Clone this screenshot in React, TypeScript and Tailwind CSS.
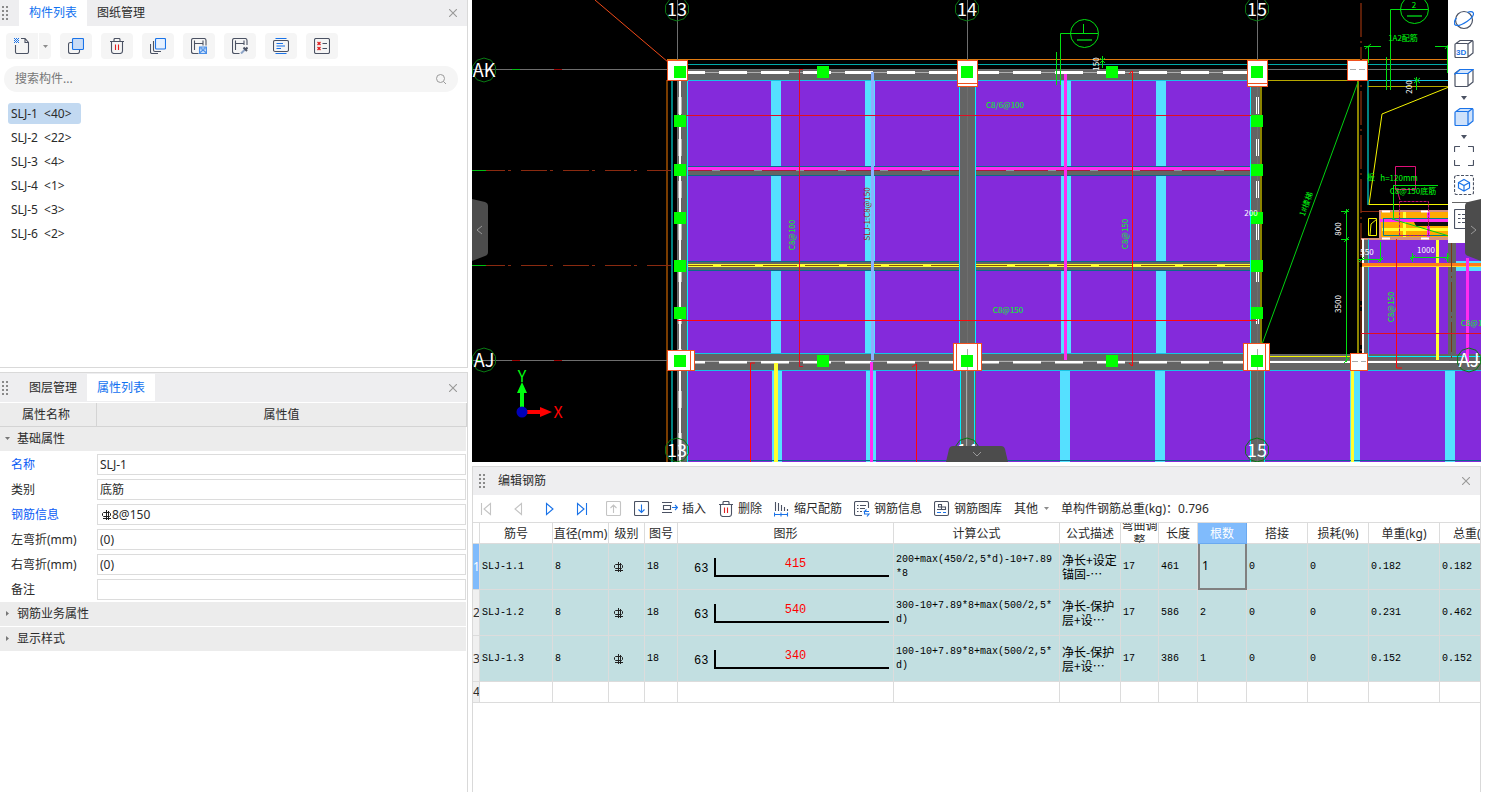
import { useState } from 'react'
import type { ReactNode } from 'react'

const INK = '#4b5263'
const BLUE = '#1a73e8'

const components = [
  { name: 'SLJ-1', count: 40 },
  { name: 'SLJ-2', count: 22 },
  { name: 'SLJ-3', count: 4 },
  { name: 'SLJ-4', count: 1 },
  { name: 'SLJ-5', count: 3 },
  { name: 'SLJ-6', count: 2 },
]

const properties = [
  { id: 'name', label: '名称', value: 'SLJ-1', key: true },
  { id: 'category', label: '类别', value: '底筋' },
  { id: 'rebar', label: '钢筋信息', value: '8@150', key: true, grade: true },
  { id: 'left', label: '左弯折(mm)', value: '(0)' },
  { id: 'right', label: '右弯折(mm)', value: '(0)' },
  { id: 'remark', label: '备注', value: '' },
]

const bars = [
  { id: 'SLJ-1.1', len: '415', formula: '200+max(450/2,5*d)-10+7.89*8', desc: '净长+设定锚固-…', total: '461', count: '1', weight: '0.182', sum: '0.182' },
  { id: 'SLJ-1.2', len: '540', formula: '300-10+7.89*8+max(500/2,5*d)', desc: '净长-保护层+设…', total: '586', count: '2', weight: '0.231', sum: '0.462' },
  { id: 'SLJ-1.3', len: '340', formula: '100-10+7.89*8+max(500/2,5*d)', desc: '净长-保护层+设…', total: '386', count: '1', weight: '0.152', sum: '0.152' },
]

const headings = ['筋号', '直径(mm)', '级别', '图号', '图形', '计算公式', '公式描述', '弯曲调整', '长度', '根数', '搭接', '损耗(%)', '单重(kg)', '总重(kg)']

function Icon({ children, size = 'h-4 w-4' }: { children: ReactNode; size?: string }) {
  return (
    <svg viewBox="0 0 16 16" className={`${size} shrink-0`} fill="none" stroke={INK} strokeWidth="1.1" aria-hidden="true">
      {children}
    </svg>
  )
}

function Grip() {
  return (
    <svg viewBox="0 0 6 14" className="h-[14px] w-[6px] shrink-0" fill="#8a8a8a" aria-hidden="true">
      {[0, 4, 8, 12].map((y) => (
        <g key={y}>
          <rect x="0" y={y} width="2" height="2" />
          <rect x="4" y={y} width="2" height="2" />
        </g>
      ))}
    </svg>
  )
}

function CloseButton() {
  return (
    <button type="button" aria-label="关闭" className="ml-auto flex h-4 w-4 items-center justify-center">
      <svg viewBox="0 0 8 8" className="h-2 w-2" stroke="#999" strokeWidth="1.1" aria-hidden="true">
        <path d="M0 0L8 8M8 0L0 8" />
      </svg>
    </button>
  )
}

// HRB400 steel grade sign
function GradeSign() {
  return (
    <svg viewBox="0 0 10 10" className="h-[10px] w-[10px] shrink-0" fill="none" stroke="#222" strokeWidth="1" aria-label="HRB400">
      <path d="M4.500 0V10M1.500 2.500H7.500L8.500 3.500V5.500L7.500 6.500H1.500L0.500 5.500V3.500ZM1 8.500H9M6.500 1V10" />
    </svg>
  )
}

function Trash() {
  return (
    <Icon>
      <path d="M1 3.500H15M5 3.500V1.500Q5 0.500 6 0.500H10Q11 0.500 11 1.500V3.500M2.500 3.500V13Q2.500 15.500 5 15.500H11Q13.500 15.500 13.500 13V3.500" />
      <path d="M6.500 6.500V12M9.500 6.500V12" stroke="#e02020" />
    </Icon>
  )
}

const checker = (x: number, y: number, color: string) => (
  <g fill={color} stroke="none">
    <path d={`M${x} ${y}h1v1h-1zM${x + 2} ${y}h1v1h-1zM${x + 1} ${y + 1}h1v1h-1zM${x} ${y + 2}h1v1h-1zM${x + 2} ${y + 2}h1v1h-1z`} />
  </g>
)

const listTools = [
  {
    label: '复制',
    icon: (
      <Icon>
        <path d="M4 4.500H2.500Q0.500 4.500 0.500 6.500V13.500Q0.500 15.500 2.500 15.500H9.500Q11.500 15.500 11.500 13.500V12" />
        <rect x="4.500" y="0.500" width="11" height="11" rx="1" fill="#c9dcf6" stroke={BLUE} />
      </Icon>
    ),
  },
  { label: '删除', icon: <Trash /> },
  {
    label: '层间复制',
    icon: (
      <Icon>
        <rect x="5.500" y="0.500" width="10" height="10.500" rx="1" fill="#e6f1ff" stroke={BLUE} />
        <path d="M3.500 3V12Q3.500 13.500 5 13.500H11M0.500 6V14Q0.500 15.500 2 15.500H8" />
      </Icon>
    ),
  },
  {
    label: '存档',
    icon: (
      <Icon>
        <path d="M7.500 15.500H2.500Q0.500 15.500 0.500 13.500V2.500Q0.500 0.500 2.500 0.500H13Q15 0.500 15 2.500V7.500M3.500 2.500V12M3.500 5.500H12M12 2.500V7.500" />
        <path d="M8.500 9H15.500V15.500H8.500Z" fill="#cfe2fb" stroke="#4a8fe7" />
        <path d="M8.500 15L12 12L15.500 15M10 9V11H14V9" stroke="#4a8fe7" />
      </Icon>
    ),
  },
  {
    label: '提取',
    icon: (
      <Icon>
        <path d="M7.500 15.500H2.500Q0.500 15.500 0.500 13.500V2.500Q0.500 0.500 2.500 0.500H13Q15 0.500 15 2.500V7M3.500 2.500V12M3.500 5.500H12M12 2.500V7" />
        <path d="M9 15.500L13 11.500" stroke="#8fa6c8" strokeWidth="2" />
        <path d="M11.500 9.500L15 13M13.500 11.500L15.500 9.500" strokeWidth="2" />
      </Icon>
    ),
  },
  {
    label: '排序',
    icon: (
      <Icon>
        <rect x="0.500" y="2.500" width="15" height="11" rx="1.500" />
        <path d="M2.500 0.500H13.500M2.500 15.500H13.500M3.500 5.500H10M3.500 8H12M3.500 10.500H8" stroke={BLUE} />
      </Icon>
    ),
  },
  {
    label: '过滤',
    icon: (
      <Icon>
        <rect x="0.500" y="0.500" width="15" height="15" rx="1.500" />
        <path d="M8.500 5.500H13M8.500 10.500H13" />
        <path d="M3.500 4L6.500 7M6.500 4L3.500 7M3.500 9L6.500 12M6.500 9L3.500 12" stroke="#e02020" strokeWidth="1.300" />
      </Icon>
    ),
  },
]

function ComponentPanel() {
  const [selected, setSelected] = useState('SLJ-1')
  return (
    <section className="mb-1 min-h-0 overflow-hidden border-b border-r border-[#d9d9d9]">
      <header className="flex h-[26px] items-center bg-[#eeeef0] pl-[2px] pr-[6px]">
        <Grip />
        <button type="button" className="ml-[11px] h-full w-[68px] bg-white text-[#1071f0]">构件列表</button>
        <button type="button" className="h-full w-[68px]">图纸管理</button>
        <CloseButton />
      </header>
      <div className="flex gap-[9px] px-[6px] pt-[7px]">
        <div className="flex gap-px">
          <button type="button" aria-label="新建" className="flex h-[26px] w-8 items-center justify-center rounded-l bg-[#f5f5f5]">
            <Icon>
              <path d="M1.500 7V14Q1.500 15.500 3 15.500H13Q14.500 15.500 14.500 14V4.500L11 0.500H7M11 0.500V4.500H14.500" />
              {checker(0, 0, BLUE)}
              {checker(2, 2, BLUE)}
              {checker(2, 0, BLUE)}
              {checker(0, 2, BLUE)}
            </Icon>
          </button>
          <button type="button" aria-label="更多新建" className="flex h-[26px] w-3 items-center justify-center rounded-r bg-[#f5f5f5]">
            <svg viewBox="0 0 5 3" className="h-[3px] w-[5px]" fill="#8c8c8c" aria-hidden="true"><path d="M0 0H5L2.500 3Z" /></svg>
          </button>
        </div>
        {listTools.map((tool) => (
          <button key={tool.label} type="button" aria-label={tool.label} className="flex h-[26px] w-8 items-center justify-center rounded bg-[#f5f5f5]">
            {tool.icon}
          </button>
        ))}
      </div>
      <div className="ml-1 mr-[9px] mt-[7px] flex h-[26px] items-center rounded-full bg-[#f5f5f5] pl-[11px] pr-3">
        <input aria-label="搜索构件" placeholder="搜索构件..." className="min-w-0 flex-1 bg-transparent outline-none placeholder:text-[#777]" />
        <svg viewBox="0 0 10 10" className="h-[10px] w-[10px]" fill="none" stroke="#999" aria-hidden="true">
          <circle cx="4.500" cy="4.500" r="4" />
          <path d="M7.500 7.500L10 10" />
        </svg>
      </div>
      <ul className="flex flex-col items-start gap-[3px] pl-2 pt-[11px]">
        {components.map((c) => (
          <li key={c.name}>
            <button
              type="button"
              onClick={() => setSelected(c.name)}
              className={`block h-[21px] min-w-[73px] whitespace-pre rounded-[3px] px-[3px] text-left ${selected === c.name ? 'bg-[#c2d9f1]' : ''}`}
            >
              {`${c.name}  <${c.count}>`}
            </button>
          </li>
        ))}
      </ul>
    </section>
  )
}

function GroupRow({ label, open = false }: { label: string; open?: boolean }) {
  return (
    <button type="button" aria-expanded={open} className="mb-px flex h-6 w-full items-center gap-[6px] bg-[#ececec] pl-[5px] text-left">
      <svg viewBox="0 0 6 6" className="h-[6px] w-[6px]" fill="#777" aria-hidden="true">
        {open ? <path d="M0 1H5L2.500 4Z" /> : <path d="M1 0V5L4 2.500Z" />}
      </svg>
      {label}
    </button>
  )
}

function PropertyPanel() {
  return (
    <section className="min-h-0 overflow-hidden border-r border-t border-[#d9d9d9]">
      <header className="mb-px flex h-[29px] items-center bg-[#eeeef0] pl-[2px] pr-[6px]">
        <Grip />
        <button type="button" className="ml-[11px] h-full w-[68px]">图层管理</button>
        <button type="button" className="h-[27px] w-[68px] bg-white text-[#1071f0]">属性列表</button>
        <CloseButton />
      </header>
      <div className="flex h-6 items-center border-b border-[#d4d4d4] bg-[#ececec] text-center">
        <div className="h-full w-[97px] border-r border-[#d4d4d4] pr-1 leading-6">属性名称</div>
        <div className="h-full flex-1 border-r border-[#d4d4d4] leading-6">属性值</div>
      </div>
      <div className="pr-px">
        <GroupRow label="基础属性" open />
        {properties.map((p) => (
          <div key={p.id} className="flex h-[25px] items-center">
            <label htmlFor={p.id} className={`w-[97px] pl-[11px] ${p.key ? 'text-[#0a5cf5]' : ''}`}>{p.label}</label>
            <div className="flex h-[21px] min-w-0 flex-1 items-center border border-[#dcdcdc] pl-[2px]">
              {p.grade && <span className="pl-[2px]"><GradeSign /></span>}
              <input id={p.id} defaultValue={p.value} className="min-w-0 flex-1 bg-transparent outline-none" />
            </div>
          </div>
        ))}
        <GroupRow label="钢筋业务属性" />
        <GroupRow label="显示样式" />
      </div>
    </section>
  )
}

const greenGrips = [
  ...[680, 823, 967, 1112, 1257].flatMap((x) => [[x, 72], [x, 361]]),
  ...[121, 170, 218, 266, 313].flatMap((y) => [[680, y], [1257, y]]),
]

const axisTags = [
  { x: 677, y: 9, t: '13' }, { x: 967, y: 9, t: '14' }, { x: 1257, y: 9, t: '15' },
  { x: 484, y: 70, t: 'AK' }, { x: 484, y: 360, t: 'AJ' }, { x: 1469, y: 360, t: 'AJ' },
  { x: 677, y: 450, t: '13' }, { x: 967, y: 450, t: '14' }, { x: 1257, y: 450, t: '15' },
]

const columns = [
  [667, 60, 20, 20], [957, 60, 20, 26], [1247, 60, 20, 26], [1347, 60, 20, 20],
  [667, 350, 27, 20], [953, 343, 28, 27], [1243, 343, 26, 27], [1350, 353, 17, 17],
]

// [x, y, text, colour, rotation]
const notes: [number, number, string, string, number][] = [
  [1005, 105, 'C8/6@100', '#00ff10', 0],
  [1008, 310, 'C8@150', '#00ff10', 0],
  [792, 235, 'C8@100', '#00ff10', -90],
  [1125, 234, 'C8@150', '#00ff10', -90],
  [1391, 307, 'C8@150', '#00ff10', -90],
  [1476, 323, 'C8@150', '#00ff10', 0],
  [867, 214, 'SLJ-1:C8@150', '#a02020', -90],
  [1399, 178, 'h=120mm', '#00ff10', 0],
  [1413, 191, 'C8@150底筋', '#00ff10', 0],
  [1371, 177, '板', '#00ff10', 0],
  [1403, 38, '1A2配筋', '#00ff10', 0],
  [1306, 204, '1#楼梯', '#00ff10', -70],
  [1096, 64, '150', '#fff', -90],
  [1409, 87, '200', '#fff', -90],
  [1338, 229, '800', '#fff', -90],
  [1338, 304, '3500', '#fff', -90],
  [1367, 252, '550', '#fff', 0],
  [1426, 250, '1000', '#fff', 0],
  [1251, 213, '200', '#fff', 0],
]

function ring(cx: number, cy: number) {
  return Array.from({ length: 10 }, (_, i) => {
    const a = (i * Math.PI) / 5 + Math.PI / 2
    return `${cx + 12 * Math.cos(a)},${cy + 12 * Math.sin(a)}`
  }).join(' ')
}

function Drawing() {
  return (
    <svg viewBox="472 0 1009 462" preserveAspectRatio="xMinYMin slice" className="h-full w-full bg-black" fill="none" role="img" aria-label="结构平面图">
      {/* slabs */}
      <path d="M687 80H1251V354H687ZM687 370H1481V462H687ZM1368 239H1481V362H1368Z" fill="#842adb" />
      <g fill="#55e0ff">
        {[771, 865, 1061, 1156].map((x) => <rect key={x} x={x} y="80" width="10" height="274" />)}
        {[772, 866, 1060, 1155, 1350, 1445].map((x) => <rect key={x} x={x} y="370" width="10" height="92" />)}
        <rect x="1456" y="261" width="25" height="10" />
      </g>

      {/* secondary beams */}
      <path d="M687 171H1251V175H687ZM687 262H1251V270H687Z" fill="#646464" />
      <path d="M687 166.500H1251M687 175.500H1251M687 261.500H1251M687 270.500H1251M687 460.500H1481" stroke="#0a6a8a" />
      <path d="M687 168.500H1251" stroke="#ff2bf0" strokeWidth="3" />
      <path d="M687 170.500H1251" stroke="#b01838" />
      <path d="M687 170.500H1251" stroke="#8f8f9f" strokeDasharray="8 34" strokeDashoffset="-25" />
      <path d="M687 265.500H1251" stroke="#ffff30" strokeWidth="3" />
      <path d="M687 265.500H1251" stroke="#8a5a00" strokeDasharray="34 8" strokeDashoffset="8" />

      {/* main beams */}
      <path d="M687 70H1251V80H687ZM678 80H687V462H678ZM960 80H976V462H960ZM1251 80H1261V353H1251ZM1251 370H1264V462H1251ZM687 354H1481V370H687ZM1448 239H1456V362H1448ZM1363 239H1368V354H1363Z" fill="#646464" />
      <path d="M687.500 80V462M959.500 80V353M975.500 80V353M960.500 370V462M974.500 370V462M1250.500 80V462M1264.500 370V462" stroke="#00f0ff" />
      <path d="M687 80.500H1251M687 353.500H1251M687 370.500H1481M1368 80.500H1449" stroke="#15c5e5" />
      <path d="M1368 356.500H1481" stroke="#00f0ff" />
      <path d="M667 59.500H1449" stroke="#e07a10" />
      <path d="M687 64.500H1449" stroke="#00a8a8" />
      <path d="M667 80V462" stroke="#7a3c00" strokeWidth="2" />
      <path d="M672 80V462M1368 80V205" stroke="#008080" strokeWidth="2" />
      <path d="M687 72.500H1251M687 361.500H1481M679.500 80V462M1257.500 80V353" stroke="#b0b0b0" />
      <path d="M687 72.500H1251M687 362H1251" stroke="#fff" strokeWidth="3" strokeDasharray="28 14" strokeDashoffset="10" />
      <path d="M680 80V462M1257.500 80V353" stroke="#fff" strokeWidth="3" strokeDasharray="17 25" strokeDashoffset="-17" />
      <path d="M1269 362H1481M680 80V462" stroke="#fff" strokeWidth="2" />
      <path d="M871 370.500H873V462H870V362H873V370ZM1064 74H1067V360H1064Z" fill="#ff2bf0" />
      <path d="M871 72H874V362H871Z" fill="#8ab0ff" />
      <path d="M774 363H778V462H774ZM1351 370H1354V462H1351ZM1436 239H1439V361H1436Z" fill="#ffff30" />
      <path d="M967 370V462" stroke="#a8a8a8" strokeWidth="2" />

      {/* axes */}
      <path d="M677.500 0V462M967.500 0V462M1257.500 0V462M472 69.500H1449M472 360.500H1449" stroke="#6e6e6e" />
      <path d="M472 170.500H671M472 265.500H671" stroke="#8a2a10" strokeDasharray="26 3 3 10" strokeDashoffset="-7" />
      <path d="M472 170.500H486M472 265.500H486M512 69.500H520M476 360.500H482" stroke="#00c010" />
      <path d="M554 69.500H562M512 360.500H520M554 360.500H562" stroke="#900" strokeWidth="1" />
      <path d="M1361 3V353" stroke="#5a1e08" strokeWidth="2" strokeDasharray="34 4 2 4" />
      <path d="M595 0L675 68" stroke="#f04a18" />

      {/* stairwell and right bay */}
      <path d="M1261 80V353M1358 80V353" stroke="#8c8400" strokeWidth="2" />
      <path d="M1268 80.500H1348M1368 86.500H1449" stroke="#b8a800" />
      <path d="M1269 356.500H1352M1449 87L1382 114L1369 204.500H1449M1368.500 218.500H1376.500V235.500H1368.500ZM1370 235L1371 224L1377 219" stroke="#f5f500" />
      <path d="M1358 82L1261 347" stroke="#00d010" />
      <path d="M1361 211.500H1380" stroke="#8a2a10" />
      <path d="M1380 211H1449V238H1380Z" fill="#ffaa00" stroke="#d89080" strokeWidth="2" />
      <path d="M1382 229.500H1449M1404.500 212V237" stroke="#ffff30" strokeWidth="3" />
      <path d="M1380 220.500H1449M1428.500 212V237" stroke="#ff2bf0" strokeWidth="3" />
      <path d="M1414 222H1449V226H1416Z" fill="#111" />
      <path d="M1383.500 218.500H1449M1383.500 218V235.500H1449" stroke="#00808a" />
      <path d="M1392 219L1449 236" stroke="#00d010" />
      <path d="M1361 239H1449" stroke="#d89080" strokeWidth="2" />
      <path d="M1382 211.500H1390M1421 211.500H1429M1382 238.500H1390M1421 238.500H1429" stroke="#fff" strokeWidth="2" />
      <path d="M1395.500 166.500H1415.500V189.500H1395.500ZM1397 190L1400 200" stroke="#e0107a" />
      <path d="M1399.500 201.500H1428.500V235.500H1399.500Z" stroke="#c0106a" strokeDasharray="3 1" />
      <path d="M1363 239V353" stroke="#fff" strokeWidth="2" />
      <path d="M1368.500 239V356" stroke="#15c5e5" />
      <path d="M1362 264.500H1481" stroke="#ff7a1a" strokeWidth="3" />
      <path d="M1362 266.500H1481" stroke="#ffd530" />
      <path d="M1451.500 242V360" stroke="#7a3418" strokeDasharray="30 4 2 4" />
      <path d="M1467.500 258V362" stroke="#ff2bf0" strokeWidth="3" />

      {/* reinforcement */}
      <path d="M680 115.500H1257M799.500 70V366M803 69.500H799M803 366H799M1361 333.500H1481" stroke="#e01020" shapeRendering="crispEdges" />
      <path d="M677 320.500H1257M1132.500 71V366M1129 74L1132 71M1129 363L1132 366M750.500 462V363H755M916.500 462V364L912 367M1396.500 239V368H1402" stroke="#ff0808" />

      {/* section marks and dimensions */}
      <g stroke="#00e010">
        <circle cx="1084.500" cy="33.500" r="14" />
        <circle cx="1414.500" cy="9.500" r="14" />
        <path d="M1098 33.500H1060.500V85M1056.500 52V85M1083.500 24V33M1428 9.500H1390.500V90M1386.500 57V90" />
        <path d="M1077 40H1092M1407 16H1422" stroke="#009010" strokeWidth="2" />
        <path d="M1364 46.500H1381M1435 46.500H1449M1365 49L1371 44M1445 49L1449 44M1368.500 46V63M1447.500 46V73" />
        <path d="M1346.500 209V362M1341 211.500H1349M1341 239.500H1349M1344 214L1349 209M1344 242L1349 237M1344 363L1349 358" />
        <path d="M1358 259.500H1383M1359 262L1364 257M1378 262L1383 257M1380.500 242V262M1410 257.500H1449M1410 260L1415 255M1445 260L1449 255M1412.500 253V262M1447.500 253V262" />
        <path d="M1393 185.500H1438M1393.500 186V220M1100 58L1105 63M1105 58L1100 63M1102.500 56V68M1414 78L1420 83M1420 78L1414 83M1416.500 77V90" />
      </g>

      {columns.map(([x, y, w, h]) => (
        <rect key={`${x}-${y}`} x={x + 0.5} y={y + 0.5} width={w} height={h} fill="#fff" stroke="#f0501e" />
      ))}
      <path d="M957 83.500H977M1247 83.500H1267M690.500 350V370M956.500 343V370M977.500 343V370M1247.500 343V370M1265.500 343V370" stroke="#f0501e" />
      <path d="M967.500 349V370M1257.500 349V370M1352 361.500H1366M1350 69.500H1366" stroke="#aaa" strokeDasharray="6 3" />
      {greenGrips.map(([x, y]) => <rect key={`${x}-${y}`} x={x - 6} y={y - 6} width="12" height="12" fill="#00ff00" />)}

      <g fontSize="8" textAnchor="middle" fontFamily="'Noto Sans CJK SC', sans-serif">
        {notes.map(([x, y, text, color, angle]) => (
          <text key={`${x}-${y}`} x={x} y={y + 3} fill={color} transform={`rotate(${angle} ${x} ${y})`}>{text}</text>
        ))}
        <text x="1414" y="8" fill="#00ff10">2</text>
      </g>

      {axisTags.map((a) => (
        <g key={`${a.x}-${a.y}`}>
          <polygon points={ring(a.x, a.y)} stroke="#0a7a14" />
          <text x={a.x} y={a.y + 7} fontSize="18" textAnchor="middle" fill="#fff" fontFamily="'Noto Sans CJK SC', sans-serif">{a.t}</text>
        </g>
      ))}

      {/* coordinate gizmo */}
      <path d="M520 407V393H517L522 382L527 393H524V407Z" fill="#00ff10" />
      <path d="M527 410H540V407L552 412L540 417V414H527Z" fill="#f00" />
      <circle cx="522" cy="412" r="5.500" fill="#0000b8" />
      <g fontSize="16" textAnchor="middle" fontFamily="'Noto Sans CJK SC', sans-serif">
        <text x="522" y="382" fill="#00ff10">Y</text>
        <text x="558" y="418" fill="#f00">X</text>
      </g>
    </svg>
  )
}

const cubePath = 'M1 5.500Q1 4.500 2 4.500H13Q14 4.500 14 5.500V17.500Q14 18.500 13 18.500H2Q1 18.500 1 17.500ZM2 4.500L6 1.500H18Q19 1.500 19 2.500V14L14 18M14 5L18.500 1.500'

function ViewButton({ label, children }: { label: string; children: ReactNode }) {
  return (
    <button type="button" aria-label={label} className="shrink-0">
      <svg viewBox="0 0 20 20" className="h-5 w-5" fill="none" stroke={INK} strokeWidth="1.200" aria-hidden="true">{children}</svg>
    </button>
  )
}

function MoreButton({ label }: { label: string }) {
  return (
    <button type="button" aria-label={label} className="flex h-[19px] w-5 items-center justify-center">
      <svg viewBox="0 0 6 4" className="h-1 w-[6px]" fill={INK} aria-hidden="true"><path d="M0 0H6L3 4Z" /></svg>
    </button>
  )
}

function ViewToolbar() {
  return (
    <div className="absolute right-0 top-0 flex h-[243px] w-[33px] flex-col items-center overflow-hidden bg-white pr-px pt-[10px]">
      <div className="flex flex-col gap-[9px]">
        <ViewButton label="动态观察">
          <circle cx="10" cy="10" r="8.500" />
          <path d="M2.500 8C-1 12 0 15.500 3 15.500C8 15.500 20 8 19.500 3.500C19 1 15.500 1.500 13.500 2.500" stroke={BLUE} />
        </ViewButton>
        <ViewButton label="三维">
          <path d={cubePath} />
          <text x="2" y="16" fontSize="8" fontWeight="700" fill={BLUE} stroke="none" fontFamily="'Liberation Sans', sans-serif">3D</text>
        </ViewButton>
        <ViewButton label="俯视">
          <path d={cubePath} />
          <path d="M1 6L6 1.500H19L14 5.500H1Z" stroke={BLUE} fill="#d5e6fc" />
        </ViewButton>
      </div>
      <MoreButton label="更多视图" />
      <ViewButton label="显示模式">
        <path d="M2 4.500L6 1.500H18Q19 1.500 19 2.500V14L14 18.500H2Q1 18.500 1 17.500V5.500Z" fill="#cfe2fb" stroke="none" />
        <path d={cubePath} stroke={BLUE} />
      </ViewButton>
      <MoreButton label="更多显示模式" />
      <div className="flex flex-col gap-[9px]">
        <ViewButton label="全屏">
          <path d="M0.500 6V1.500Q0.500 0.500 1.500 0.500H6M14 0.500H18.500Q19.500 0.500 19.500 1.500V6M19.500 14V18.500Q19.500 19.500 18.500 19.500H14M6 19.500H1.500Q0.500 19.500 0.500 18.500V14" />
        </ViewButton>
        <ViewButton label="局部三维">
          <rect x="0.500" y="0.500" width="19" height="19" rx="2" strokeDasharray="3 1.500" />
          <path d="M10 4.500L15.500 7.500V13L10 16L4.500 13V7.500ZM4.500 7.500L10 10.500L15.500 7.500M10 10.500V16" stroke={BLUE} />
        </ViewButton>
      </div>
      <div className="mt-[7px] w-6 shrink-0 border-t border-[#666] pl-[2px] pt-[6px]">
        <ViewButton label="显示设置">
          <path d="M15 0.500H1.500Q0.500 0.500 0.500 1.500V18.500Q0.500 19.500 1.500 19.500H15M4 5.500H6.500M8 5.500H14M4 9.500H6.500M8 9.500H14M4 13.500H6.500M8 13.500H14" />
        </ViewButton>
      </div>
    </div>
  )
}

function Viewport() {
  return (
    <div className="relative min-h-0 overflow-hidden bg-black">
      <Drawing />
      <ViewToolbar />
      <button type="button" aria-label="收起左侧" className="absolute left-0 top-[199px]">
        <svg viewBox="0 0 16 62" className="h-[62px] w-4" fill="none" aria-hidden="true">
          <path d="M0 0L13 3Q16 4 16 7V53Q16 56 13 57L0 62Z" fill="#4c4c4c" />
          <path d="M10 27L5 31L10 35" stroke="#999" />
        </svg>
      </button>
      <button type="button" aria-label="收起右侧" className="absolute right-0 top-[199px]">
        <svg viewBox="0 0 16 62" className="h-[62px] w-4" fill="none" aria-hidden="true">
          <path d="M16 0L3 3Q0 4 0 7V53Q0 56 3 57L16 62Z" fill="#4c4c4c" />
          <path d="M6 27L11 31L6 35" stroke="#999" />
        </svg>
      </button>
      <button type="button" aria-label="收起底部" className="absolute bottom-0 left-[474px]">
        <svg viewBox="0 0 62 16" className="h-4 w-[62px]" fill="none" aria-hidden="true">
          <path d="M0 16L3 3Q4 0 7 0H55Q58 0 59 3L62 16Z" fill="#4c4c4c" />
          <path d="M27 6L31 10L35 6" stroke="#999" />
        </svg>
      </button>
    </div>
  )
}

function ToolButton({ label, icon }: { label: string; icon: ReactNode }) {
  return (
    <button type="button" className="flex shrink-0 items-center gap-1">
      {icon}
      {label}
    </button>
  )
}

function RebarToolbar() {
  return (
    <div className="flex h-7 items-center gap-3 whitespace-nowrap border-b border-[#dcdcdc] pl-[5px]">
      <div className="flex gap-4">
        <button type="button" aria-label="第一条"><Icon><path d="M3.500 2V14M12.500 2.500V13.500L6 8Z" stroke="#c4c4c4" /></Icon></button>
        <button type="button" aria-label="上一条"><Icon><path d="M11.500 2.500V13.500L5 8Z" stroke="#c4c4c4" /></Icon></button>
        <button type="button" aria-label="下一条"><Icon><path d="M4.500 2.500V13.500L11 8Z" stroke={BLUE} /></Icon></button>
        <button type="button" aria-label="最后一条"><Icon><path d="M3.500 2.500V13.500L10 8ZM12.500 2V14" stroke={BLUE} /></Icon></button>
        <button type="button" aria-label="上移"><Icon><rect x="0.500" y="0.500" width="14" height="14" rx="1" stroke="#c4c4c4" /><path d="M7.500 12V4M4.500 7L7.500 4L10.500 7" stroke="#c4c4c4" /></Icon></button>
      </div>
      <button type="button" aria-label="下移"><Icon><rect x="0.500" y="0.500" width="14" height="14" rx="1" /><path d="M7.500 3.500V11.500M4.500 8.500L7.500 11.500L10.500 8.500" stroke={BLUE} /></Icon></button>
      <ToolButton label="插入" icon={<Icon><path d="M0 1.500H10M0 11.500H10M1.500 4.500H8.500V8.500H1.500Z" /><path d="M10 6.500H15M13 4L15.500 6.500L13 9" stroke={BLUE} /></Icon>} />
      <ToolButton label="删除" icon={<Trash />} />
      <ToolButton label="缩尺配筋" icon={<Icon><path d="M1.500 1V10M4.500 2V10M7.500 4V10M10.500 6V10M13.500 8V10" /><path d="M0.500 13.500H13.500M0.500 11.500V15.500M7 11.500V15.500M13.500 11.500V15.500" stroke={BLUE} /></Icon>} />
      <ToolButton label="钢筋信息" icon={<Icon><path d="M8 14.500H2Q0.500 14.500 0.500 13V2Q0.500 0.500 2 0.500H13Q14.500 0.500 14.500 2V7M3 4.500H4.500M6 4.500H12M3 7.500H4.500M6 7.500H11M3 10.500H4.500M6 10.500H8" /><path d="M15 10.500H10.500L12.500 8.500M10 13H15L13 15.500M10.500 10.500V13" stroke={BLUE} /></Icon>} />
      <ToolButton label="钢筋图库" icon={<Icon><rect x="0.500" y="0.500" width="14" height="14" rx="1.500" /><path d="M3 8.500H11.500V6H4.500V3.500H7.500V8.500" /><path d="M3 11.500H7M9 11.500H12" stroke={BLUE} /></Icon>} />
      <button type="button" className="flex items-center gap-[6px]">
        其他
        <svg viewBox="0 0 5 3" className="h-[3px] w-[5px]" fill="#8c8c8c" aria-hidden="true"><path d="M0 0H5L2.500 3Z" /></svg>
      </button>
      <span>单构件钢筋总重(kg)：0.796</span>
    </div>
  )
}

const cell = 'border-b border-r border-[#dcdcdc] px-[2px] py-0'

function RebarTable() {
  return (
    <table className="w-[1039px] table-fixed border-separate border-spacing-0">
      <colgroup>
        <col className="w-[7px]" />
        <col className="w-[73px]" />
        <col className="w-[56px]" />
        <col className="w-[36px]" />
        <col className="w-[33px]" />
        <col className="w-[216px]" />
        <col className="w-[166px]" />
        <col className="w-[61px]" />
        <col className="w-[38px]" />
        <col className="w-[39px]" />
        <col className="w-[49px]" />
        <col className="w-[61px]" />
        <col className="w-[61px]" />
        <col className="w-[71px]" />
        <col className="w-[72px]" />
      </colgroup>
      <thead>
        <tr>
          <td className={cell} />
          {headings.map((h) => (
            <th key={h} scope="col" className={`border-b border-r p-0 font-normal ${h === '根数' ? 'border-[#6aa9f0] bg-[#80bbfc] text-white' : 'border-[#dcdcdc]'}`}>
              <div className="flex h-5 items-center justify-center overflow-hidden leading-[15px]">{h}</div>
            </th>
          ))}
        </tr>
      </thead>
      <tbody>
        {bars.map((bar, i) => (
          <tr key={bar.id} className="h-[46px] bg-[#c2dfe1] font-['Liberation_Mono','Noto_Sans_CJK_SC',monospace] text-[10px] leading-[14px] text-black">
            <th scope="row" className={`overflow-hidden border-b border-r border-[#dcdcdc] p-0 font-['Noto_Sans',sans-serif] text-xs font-normal ${i === 0 ? 'bg-[#80bbfc] text-white' : 'bg-[#f0f0f0] text-[#333]'}`}>{i + 1}</th>
            <td className={cell}>{bar.id}</td>
            <td className={cell}>8</td>
            <td className={cell}><div className="pl-[3px]"><GradeSign /></div></td>
            <td className={cell}>18</td>
            <td className={`${cell} text-xs`}>
              <div className="flex items-end pl-[14px] pt-[2px]">
                <span className="w-5 leading-4">63</span>
                <span className="h-[19px] w-[175px] border-b-2 border-l-2 border-black pr-[14px] text-center leading-3 text-[#f00]">{bar.len}</span>
              </div>
            </td>
            <td className={`${cell} break-all`}>{bar.formula}</td>
            <td className={`${cell} break-all font-['Noto_Sans_CJK_SC',sans-serif] text-xs leading-[14px]`}>{bar.desc}</td>
            <td className={cell}>17</td>
            <td className={cell}>{bar.total}</td>
            {i === 0 ? (
              <td className="border-2 border-t-0 border-[#808080] px-[2px] py-0 font-['Noto_Sans',sans-serif] text-xs">{bar.count}</td>
            ) : (
              <td className={cell}>{bar.count}</td>
            )}
            <td className={cell}>0</td>
            <td className={cell}>0</td>
            <td className={cell}>{bar.weight}</td>
            <td className={cell}>{bar.sum}</td>
          </tr>
        ))}
        <tr className="h-[21px]">
          <th scope="row" className="overflow-hidden border-b border-r border-[#dcdcdc] bg-[#f0f0f0] p-0 font-normal">4</th>
          {headings.map((h) => <td key={h} className={cell} />)}
        </tr>
      </tbody>
    </table>
  )
}

function RebarPanel() {
  return (
    <section className="mt-1 min-h-0 overflow-hidden border-x border-t border-[#d9d9d9]">
      <header className="flex h-7 items-center bg-[#eeeef0] pl-[6px] pr-[6px]">
        <Grip />
        <h2 className="ml-[13px]">编辑钢筋</h2>
        <CloseButton />
      </header>
      <RebarToolbar />
      <div className="overflow-hidden">
        <RebarTable />
      </div>
    </section>
  )
}

export default function App() {
  return (
    <main className="flex h-screen gap-1 overflow-hidden bg-white pr-1 font-['Noto_Sans','Noto_Sans_CJK_SC',sans-serif] text-xs text-[#2b2b2b]">
      <aside className="grid w-[468px] shrink-0 grid-rows-[372fr_420fr]">
        <ComponentPanel />
        <PropertyPanel />
      </aside>
      <div className="grid min-w-0 flex-1 grid-cols-1 grid-rows-[462fr_330fr]">
        <Viewport />
        <RebarPanel />
      </div>
    </main>
  )
}
